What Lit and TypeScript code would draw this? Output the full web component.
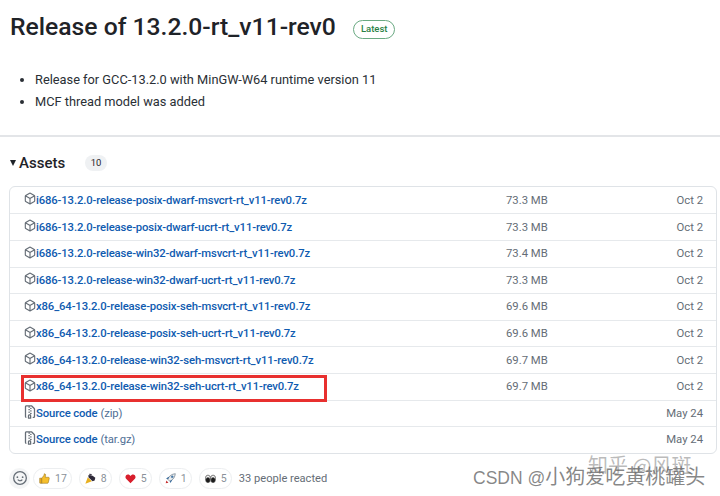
import { LitElement, html, css, svg } from "lit";
import { customElement } from "lit/decorators.js";

const assets = [
  ["i686-13.2.0-release-posix-dwarf-msvcrt-rt_v11-rev0.7z", "73.3 MB"],
  ["i686-13.2.0-release-posix-dwarf-ucrt-rt_v11-rev0.7z", "73.3 MB"],
  ["i686-13.2.0-release-win32-dwarf-msvcrt-rt_v11-rev0.7z", "73.4 MB"],
  ["i686-13.2.0-release-win32-dwarf-ucrt-rt_v11-rev0.7z", "73.3 MB"],
  ["x86_64-13.2.0-release-posix-seh-msvcrt-rt_v11-rev0.7z", "69.6 MB"],
  ["x86_64-13.2.0-release-posix-seh-ucrt-rt_v11-rev0.7z", "69.6 MB"],
  ["x86_64-13.2.0-release-win32-seh-msvcrt-rt_v11-rev0.7z", "69.7 MB"],
  ["x86_64-13.2.0-release-win32-seh-ucrt-rt_v11-rev0.7z", "69.7 MB"],
];

const pkg = html`<svg class="ic" viewBox="0 0 16 16"><path fill="#656d76" d="m8.878.392 5.25 3.045c.54.314.872.89.872 1.514v6.098a1.75 1.75 0 0 1-.872 1.514l-5.25 3.045a1.75 1.75 0 0 1-1.756 0l-5.25-3.045A1.75 1.75 0 0 1 1 11.049V4.951c0-.624.332-1.201.872-1.514L7.122.392a1.75 1.75 0 0 1 1.756 0ZM7.875 1.69l-4.63 2.685L8 7.133l4.755-2.758-4.63-2.685a.248.248 0 0 0-.25 0ZM2.5 5.677v5.372c0 .09.047.171.125.216l4.625 2.683V8.432Zm6.25 8.271 4.625-2.683a.25.25 0 0 0 .125-.216V5.677L8.75 8.432Z"/></svg>`;
const zip = html`<svg class="ic zip" viewBox="1 0 14 16"><path fill="#656d76" d="M3.5 1.75v11.5c0 .09.048.173.126.217a.75.75 0 0 1-.752 1.298A1.748 1.748 0 0 1 2 13.25V1.75C2 .784 2.784 0 3.75 0h5.586c.464 0 .909.185 1.237.513l2.914 2.914c.329.328.513.773.513 1.237v8.586A1.75 1.75 0 0 1 12.25 15h-.5a.75.75 0 0 1 0-1.5h.5a.25.25 0 0 0 .25-.25V4.664a.25.25 0 0 0-.073-.177L9.513 1.573a.25.25 0 0 0-.177-.073H7.25a.75.75 0 0 1 0 1.5h-.5a.75.75 0 0 1 0-1.5h-3a.25.25 0 0 0-.25.25Zm3.75 8.75h.5c.966 0 1.75.784 1.75 1.75v3a.75.75 0 0 1-.75.75h-2.5a.75.75 0 0 1-.75-.75v-3c0-.966.784-1.75 1.75-1.75ZM6 5.25a.75.75 0 0 1 .75-.75h.5a.75.75 0 0 1 0 1.5h-.5A.75.75 0 0 1 6 5.25Zm.75 2.25h.5a.75.75 0 0 1 0 1.5h-.5a.75.75 0 0 1 0-1.5ZM8 6.75A.75.75 0 0 1 8.75 6h.5a.75.75 0 0 1 0 1.5h-.5A.75.75 0 0 1 8 6.75ZM8.750 3h.5a.75.75 0 0 1 0 1.5h-.5a.75.75 0 0 1 0-1.5ZM8 9.75A.75.75 0 0 1 8.75 9h.5a.75.75 0 0 1 0 1.5h-.5A.75.75 0 0 1 8 9.75Zm-1 2.5v2.25h1v-2.25a.25.25 0 0 0-.25-.25h-.5a.25.25 0 0 0-.25.25Z"/></svg>`;
const smile = html`<svg viewBox="0 0 16 16" width="14" height="14"><path fill="#656d76" d="M8 0a8 8 0 1 1 0 16A8 8 0 0 1 8 0ZM1.500 8a6.500 6.500 0 1 0 13 0 6.500 6.500 0 0 0-13 0Zm3.820 1.636a.75.75 0 0 1 1.038.175l.007.009c.103.118.22.222.35.31.264.178.683.37 1.285.37.602 0 1.020-.192 1.285-.371.13-.088.247-.192.35-.31l.007-.008a.75.75 0 0 1 1.222.87c-.16.222-.338.416-.53.545-.63.418-1.370.638-2.127.629-.946 0-1.652-.308-2.126-.63a3.331 3.331 0 0 1-.715-.657.75.75 0 0 1-.046-.952ZM12 7a1 1 0 1 1-2 0 1 1 0 0 1 2 0ZM5 8a1 1 0 1 1 0-2 1 1 0 0 1 0 2Z"/></svg>`;

const thumbs = svg`<path fill="#f2b01e" stroke="#8a6410" stroke-width=".7" d="M1 7.500h3V15H2a1 1 0 0 1-1-1Z"/><path fill="#f6bf2c" stroke="#8a6410" stroke-width=".7" d="M4 7.500 7.500 3V1.200c1.600-.4 2.600 1 2 2.800L9 6.200h4.600c1.200 0 1.600 1 1.300 2l-1.400 5.800c-.2.7-.7 1-1.400 1H4Z"/>`;
const tada = svg`<path fill="#e8b020" d="M.5 15.500 4 6l6 6Z"/><path fill="#2f2a3a" d="M5 3l6 1 4 3-1 4-3 1-6-6Z"/><path fill="#46404f" d="M6 1l4 .5L9 4 6.500 3.500Z"/>`;
const heart = svg`<path fill="#d81e2c" d="M8 15 1.600 8.400C-.4 6 1 2 4.300 2 6 2 7.200 3 8 4.200 8.800 3 10 2 11.700 2 15 2 16.400 6 14.400 8.400Z"/>`;
const rocket = svg`<path fill="#c62f2f" d="M1 15l1-4 3 3Z"/><path fill="#e8eef2" stroke="#49596a" stroke-width=".8" d="M4 9C6 4 10 1.500 15 1c-.5 5-3 9-8 11Z"/><circle cx="10.500" cy="5.500" r="1.500" fill="#3d87c9" stroke="#49596a" stroke-width=".6"/><path fill="#3d6e9e" d="M4 9 1.500 8.500 5 5.500 6 6.500ZM7 12l.5 2.500L10.500 11l-1-1Z"/>`;
const eyes = svg`<ellipse cx="4.300" cy="8.500" rx="3.800" ry="5.500" fill="#f4f4f4" stroke="#333" stroke-width=".9"/><ellipse cx="11.700" cy="8.500" rx="3.800" ry="5.500" fill="#f4f4f4" stroke="#333" stroke-width=".9"/><ellipse cx="4.300" cy="10" rx="3" ry="3.800" fill="#1c1c1c"/><ellipse cx="11.700" cy="10" rx="3" ry="3.800" fill="#1c1c1c"/>`;

const reactions: [unknown, string][] = [
  [thumbs, "17"],
  [tada, "8"],
  [heart, "5"],
  [rocket, "1"],
  [eyes, "5"],
];

@customElement("app-root")
export class AppRoot extends LitElement {
  static styles = css`
    :host {
      display: block;
      width: 720px;
      height: 496px;
      overflow: hidden;
      position: relative;
      background: #fff;
      color: #1f2328;
      font-family: Roboto, "Noto Sans", sans-serif;
    }
    .head {
      display: flex;
      align-items: center;
      gap: 17px;
      padding: 6px 0 0 10px;
      height: 42px;
    }
    h1 {
      margin: 0;
      font-size: 24.700px;
      font-weight: 500;
      line-height: 36px;
      white-space: nowrap;
    }
    .latest {
      font-size: 9.500px;
      font-weight: 500;
      color: #2a7f45;
      border: 1px solid #6aa982;
      border-radius: 10px;
      height: 17px;
      line-height: 16px;
      padding: 0 7px;
      margin-top: 4px;
    }
    ul {
      margin: 21px 0 0;
      padding: 0 0 0 35px;
      font-size: 12.800px;
      line-height: 22.400px;
      color: #2a2f35;
    }
    hr {
      border: 0;
      height: 2px;
      background: #e3e5e8;
      margin: 21px 0 0;
    }
    .assets {
      display: flex;
      align-items: center;
      padding: 13px 0 0 10px;
      height: 26px;
    }
    .tri {
      width: 0;
      height: 0;
      border-left: 3.500px solid transparent;
      border-right: 3.500px solid transparent;
      border-top: 6px solid #1f2328;
      margin-right: 3px;
    }
    h2 {
      margin: 0;
      font-size: 15px;
      font-weight: 500;
    }
    .count {
      margin-left: 20px;
      background: #eff1f3;
      border-radius: 10px;
      font-size: 9.500px;
      line-height: 16px;
      height: 16px;
      padding: 0 5.500px;
    }
    .card {
      margin: 10px 3px 0 9px;
      border: 1px solid #dfe3e7;
      border-radius: 6px;
      box-sizing: border-box;
      height: 268px;
    }
    .row {
      position: relative;
      display: grid;
      grid-template-columns: 1fr 100px 97px;
      align-items: center;
      height: 26.600px;
      box-sizing: border-box;
      padding: 0 13px 0 14px;
      border-top: 1px solid #e6e9ec;
      font-size: 11.300px;
    }
    .row:first-child { border-top: 0; }
    .name {
      display: flex;
      align-items: center;
      min-width: 0;
      white-space: nowrap;
      color: #0f5bb0;
      font-weight: 500;
      letter-spacing: -0.13px;
    }
    .ic { width: 12px; height: 13px; flex: none; margin-top: -3px; }
    .zip { height: 14px; }
    .muted { color: #4f6f95; font-weight: 400; margin-left: 3px; }
    .size { color: #656d76; }
    .date { color: #656d76; text-align: right; }
    .mark {
      position: absolute;
      z-index: 1;
      left: 11px;
      top: 1px;
      width: 306px;
      height: 27px;
      box-sizing: border-box;
      border: 3px solid #e8302f;
      pointer-events: none;
    }
    .reactions {
      display: flex;
      align-items: center;
      gap: 7px;
      padding: 14px 0 0 9px;
      font-size: 10.500px;
      color: #656d76;
    }
    .add {
      width: 21px;
      height: 21px;
      border-radius: 50%;
      background: #f4f5f6;
      display: flex;
      align-items: center;
      justify-content: center;
      margin-right: -4px;
    }
    .pill {
      display: flex;
      align-items: center;
      gap: 5px;
      height: 21px;
      padding: 0 4px 0 5px;
      border: 1px solid #eceef0;
      border-radius: 11px;
      box-sizing: border-box;
      color: #8a9199;
      min-width: 33px;
    }
    .pill svg { width: 11px; height: 11px; flex: none; }
    .said { color: #656d76; white-space: nowrap; font-size: 11.100px; }
    .wm1, .wm2 {
      position: absolute;
      white-space: nowrap;
      font-family: "Noto Sans CJK SC", "Noto Sans", sans-serif;
      font-size: 20px;
      line-height: 26px;
    }
    .wm1 {
      left: 588px;
      top: 452px;
      color: rgba(120, 120, 120, .5);
    }
    .wm2 {
      left: 473px;
      top: 463px;
      color: rgba(95, 95, 95, .75);
    }
    .lat { font-family: "Liberation Sans", sans-serif; font-size: 17.500px; }
  `;

  render() {
    return html`
      <div class="head"><h1>Release of 13.2.0-rt_v11-rev0</h1><span class="latest">Latest</span></div>
      <ul>
        <li>Release for GCC-13.2.0 with MinGW-W64 runtime version 11</li>
        <li>MCF thread model was added</li>
      </ul>
      <hr />
      <div class="assets"><span class="tri"></span><h2>Assets</h2><span class="count">10</span></div>
      <div class="card">
        ${assets.map(
          ([n, s], i) => html`<div class="row">
            <span class="name">${pkg}${n}</span><span class="size">${s}</span><span class="date">Oct 2</span>
            ${i === 7 ? html`<span class="mark"></span>` : ""}
          </div>`
        )}
        <div class="row"><span class="name">${zip}Source code<span class="muted">(zip)</span></span><span></span><span class="date">May 24</span></div>
        <div class="row"><span class="name">${zip}Source code<span class="muted">(tar.gz)</span></span><span></span><span class="date">May 24</span></div>
      </div>
      <div class="reactions">
        <span class="add">${smile}</span>
        ${reactions.map(([g, c]) => html`<span class="pill"><svg viewBox="0 0 16 16">${g}</svg>${c}</span>`)}
        <span class="said">33 people reacted</span>
      </div>
      <div class="wm1">知乎 @风斑</div>
      <div class="wm2"><span class="lat">CSDN @</span>小狗爱吃黄桃罐头</div>
    `;
  }
}
